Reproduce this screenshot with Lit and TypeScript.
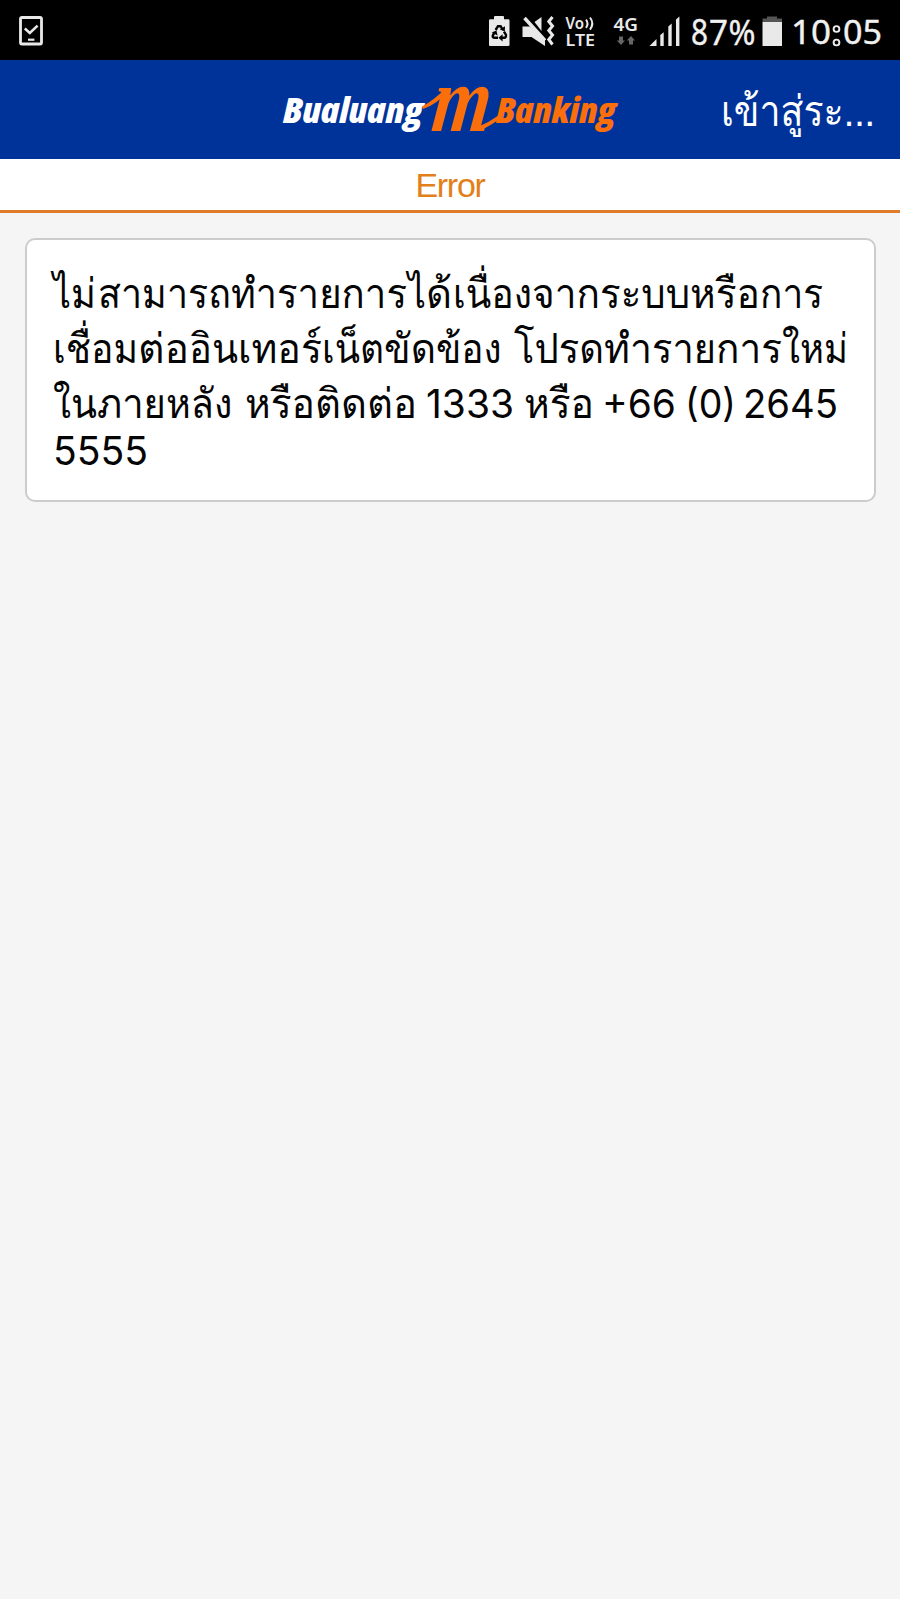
import { LitElement, html, svg, css } from "lit";
import { customElement } from "lit/decorators.js";

@customElement("status-bar")
class StatusBar extends LitElement {
  static styles = css`
    :host { display: block; height: 60px; background: #000; overflow: hidden; }
    svg { display: block; }
    .sys { font-family: "Noto Sans", sans-serif; font-weight: 600; fill: #e9e9e9; }
    .hand { font-family: "Noto Sans", sans-serif; font-weight: 400; fill: #f1f1f1; stroke: #f1f1f1; stroke-width: 0.4px; stroke-linejoin: round; }
  `;
  render() {
    return html`<svg width="900" height="60" viewBox="0 0 900 60" fill="#e9e9e9">
      <rect x="20.500" y="17.500" width="21" height="26.500" rx="1.500" fill="none" stroke="#e9e9e9" stroke-width="2.800"/>
      <path d="M24.800 28.500L29.800 33L37.600 25.600" fill="none" stroke="#e9e9e9" stroke-width="2.500"/>
      <rect x="28" y="38.600" width="6.400" height="2.200"/>

      <path d="M489 20.500q0-1.200 1.200-1.200H494V17q0-1 1-1h8q1 0 1 1v2.300h4.200q1.300 0 1.300 1.200V45q0 1-1.300 1H490.200q-1.200 0-1.200-1z"/>
      <g fill="none" stroke="#000" stroke-width="2.400">
        <path d="M495.600 30L498 26.200H500.600L502.400 29.200"/>
        <path d="M504 31.600L506 35Q506.400 37.600 504 37.800H502"/>
        <path d="M498 37.800H494.400Q492 37.400 493 35L494.600 32.500"/>
      </g>
      <path d="M499.800 29.600l5 1.800l.2-5.200zM502.600 34.200v7.200l-4.200-3.600zM491.800 32.600l4.600-2l1.200 4.800z" fill="#000"/>

      <path d="M522.500 26.500H530L545 40V46L531.500 37H522.500z"/>
      <path d="M534.500 22L541.500 17V31z"/>
      <path d="M524.500 18L545 40.500" stroke="#e9e9e9" stroke-width="3.400"/>
      <path d="M552.500 17L548.800 21.500L552.500 26L548.800 30.500L552.500 35L548.800 39.500L552.500 44.500" fill="none" stroke="#e9e9e9" stroke-width="3"/>

      <text class="sys" x="565.500" y="28.500" font-size="15.500" textLength="18.500" lengthAdjust="spacingAndGlyphs">Vo</text>
      <path d="M586 19.600Q589 23.600 586 27.800M590 17.500Q594.600 23.400 590 29.600" fill="none" stroke="#e9e9e9" stroke-width="2"/>
      <text class="sys" x="565.500" y="45.500" font-size="16.500" textLength="29.500" lengthAdjust="spacingAndGlyphs">LTE</text>
      <text class="sys" x="613.500" y="30.800" font-size="17.500" textLength="24.500" lengthAdjust="spacingAndGlyphs">4G</text>
      <path d="M619 36.500h4v4h2L621 45l-4.200-4.500H619zM629 44.500h4v-4h2L631 36l-4.200 4.500H629z" fill="#666"/>

      <path d="M649.500 46H656.500V39zM660.300 46V35l3.400-2.800V46zM668.300 46V26.500l3.400-3V46zM676 46V19.500l3.400-3V46z"/>

      <text class="hand" x="691" y="44.500" font-size="36" textLength="17" lengthAdjust="spacingAndGlyphs">8</text>
      <text class="hand" x="709" y="44.500" font-size="34" textLength="19" lengthAdjust="spacingAndGlyphs">7</text>
      <text class="hand" x="728.500" y="44.500" font-size="34" textLength="27" lengthAdjust="spacingAndGlyphs">%</text>
      <path d="M762.500 22v-3.500H767V16.500h10V18.500h5V22z" fill="#555"/>
      <rect x="762.500" y="22" width="19.500" height="24"/>
      <text class="hand" x="791" y="43.500" font-size="32" textLength="40" lengthAdjust="spacingAndGlyphs">10</text>
      <circle cx="836.500" cy="29" r="2.900" fill="none" stroke="#eee" stroke-width="1.900"/>
      <circle cx="836.500" cy="42.500" r="2.900" fill="none" stroke="#eee" stroke-width="1.900"/>
      <text class="hand" x="843" y="43.500" font-size="32" textLength="39" lengthAdjust="spacingAndGlyphs">05</text>
    </svg>`;
  }
}

@customElement("brand-logo")
class BrandLogo extends LitElement {
  static styles = css`
    :host { display: block; }
    svg { display: block; overflow: visible; }
    .word { font-family: "Open Sans", "Liberation Sans", sans-serif; font-weight: 800; font-style: italic; font-stretch: 75%; }
    .mark { font-family: "Liberation Serif", serif; font-weight: 700; font-style: italic; fill: #fa6f0c; }
    .white { fill: #fff; }
    .orange { fill: #fa6f0c; }
  `;
  render() {
    return html`<svg width="340" height="99" viewBox="0 0 340 99">
      <text class="word white" x="3" y="62.500" font-size="35.500" textLength="140" lengthAdjust="spacingAndGlyphs">Bualuang</text>
      <text class="word orange" x="216" y="62.500" font-size="35.500" textLength="120" lengthAdjust="spacingAndGlyphs">Banking</text>
      <g transform="translate(150 70.500) skewX(-7)">
        <text class="mark" x="0" y="0" font-size="94" textLength="58" lengthAdjust="spacingAndGlyphs">m</text>
      </g>
      <path d="M142 46.500Q153 41 166 28L171 29Q156 45 143 49zM196 67Q208 64 224 51L223 56Q210 67 198 71z" fill="#fa6f0c"/>
    </svg>`;
  }
}

type Run = [text: string, x: number, length: number, latin?: boolean];

/* Each run holds its left edge and advance inside the message card. */
const MESSAGE: { baseline: number; runs: Run[] }[] = [
  { baseline: 46, runs: [
    ["ไ", 0, 18], ["ม่", 18, 25], ["สามารถ", 45, 133], ["ทำ", 178, 46], ["รายการ", 224, 130], ["ไ", 355, 18],
    ["ด้", 373, 26], ["เนื่อง", 400, 79], ["จาก", 479, 68], ["ระบบ", 547, 90], ["หรือ", 637, 70], ["การ", 707, 63],
  ]},
  { baseline: 101, runs: [
    ["เชื่อม", 0, 85], ["ต่อ", 85, 51], ["อิน", 136, 49], ["เทอร์", 185, 84], ["เน็ต", 269, 62], ["ขัด", 331, 52],
    ["ข้อง ", 383, 78], ["โปรด", 461, 90], ["ทำ", 551, 48], ["ราย", 599, 64], ["การ", 663, 66], ["ใ", 729, 18], ["หม่", 747, 48],
  ]},
  { baseline: 156, runs: [
    ["ใ", 0, 18], ["น", 18, 26], ["ภาย", 44, 69], ["หลัง ", 113, 79], ["หรือ", 192, 70], ["ติด", 262, 52],
    ["ต่อ", 314, 50], ["1333", 373, 88, true], ["หรือ", 471, 70], ["+66", 549, 74, true], ["(0)", 632, 51, true], ["2645", 690, 95, true],
  ]},
  { baseline: 203, runs: [["5555", 0, 95, true]] },
];

@customElement("app-root")
class AppRoot extends LitElement {
  static styles = css`
    :host { display: block; min-height: 1599px; background: #f5f5f5; font-family: "Loma", "Noto Sans Thai", "Noto Sans", sans-serif; }
    .header { height: 99px; background: #003399; display: grid; grid-template-columns: 1fr 340px 1fr; align-items: center; }
    .logo { grid-column: 2; }
    .login { justify-self: end; margin-right: 24px; }
    .login svg { display: block; overflow: visible; }
    .login text { fill: #fff; font-size: 43px; }
    .title { height: 51px; background: #fff; border-bottom: 3px solid #df7d2b; color: #e37f18; font: 34px/53px "Liberation Sans", sans-serif; letter-spacing: -1.300px; text-align: center; }
    .card { margin: 25px 24px 0 25px; box-sizing: border-box; height: 264px; border: 2px solid #ccc; border-radius: 10px; background: #fff; padding: 22px 24px 22px 26px; }
    .card svg { display: block; overflow: visible; }
    .thai { font-size: 41.500px; fill: #050505; }
    .latin { font-family: "Inter", "Liberation Sans", sans-serif; font-size: 39.500px; }
  `;
  render() {
    return html`
      <status-bar></status-bar>
      <div class="header">
        <brand-logo class="logo"></brand-logo>
        <div class="login"><svg width="155" height="99" viewBox="0 0 155 99">
          <text x="0" y="65.500" textLength="154" lengthAdjust="spacingAndGlyphs">เข้าสู่ระ...</text>
        </svg></div>
      </div>
      <div class="title">Error</div>
      <div class="card">
        <svg width="796" height="216" viewBox="0 0 796 216">
          ${MESSAGE.map(({ baseline, runs }) => svg`<text class="thai" y=${baseline}>${runs.map(([t, x, len, latin]) =>
            svg`<tspan class=${latin ? "latin" : ""} x=${x} textLength=${len} lengthAdjust="spacingAndGlyphs">${t}</tspan>`)}</text>`)}
        </svg>
      </div>`;
  }
}
